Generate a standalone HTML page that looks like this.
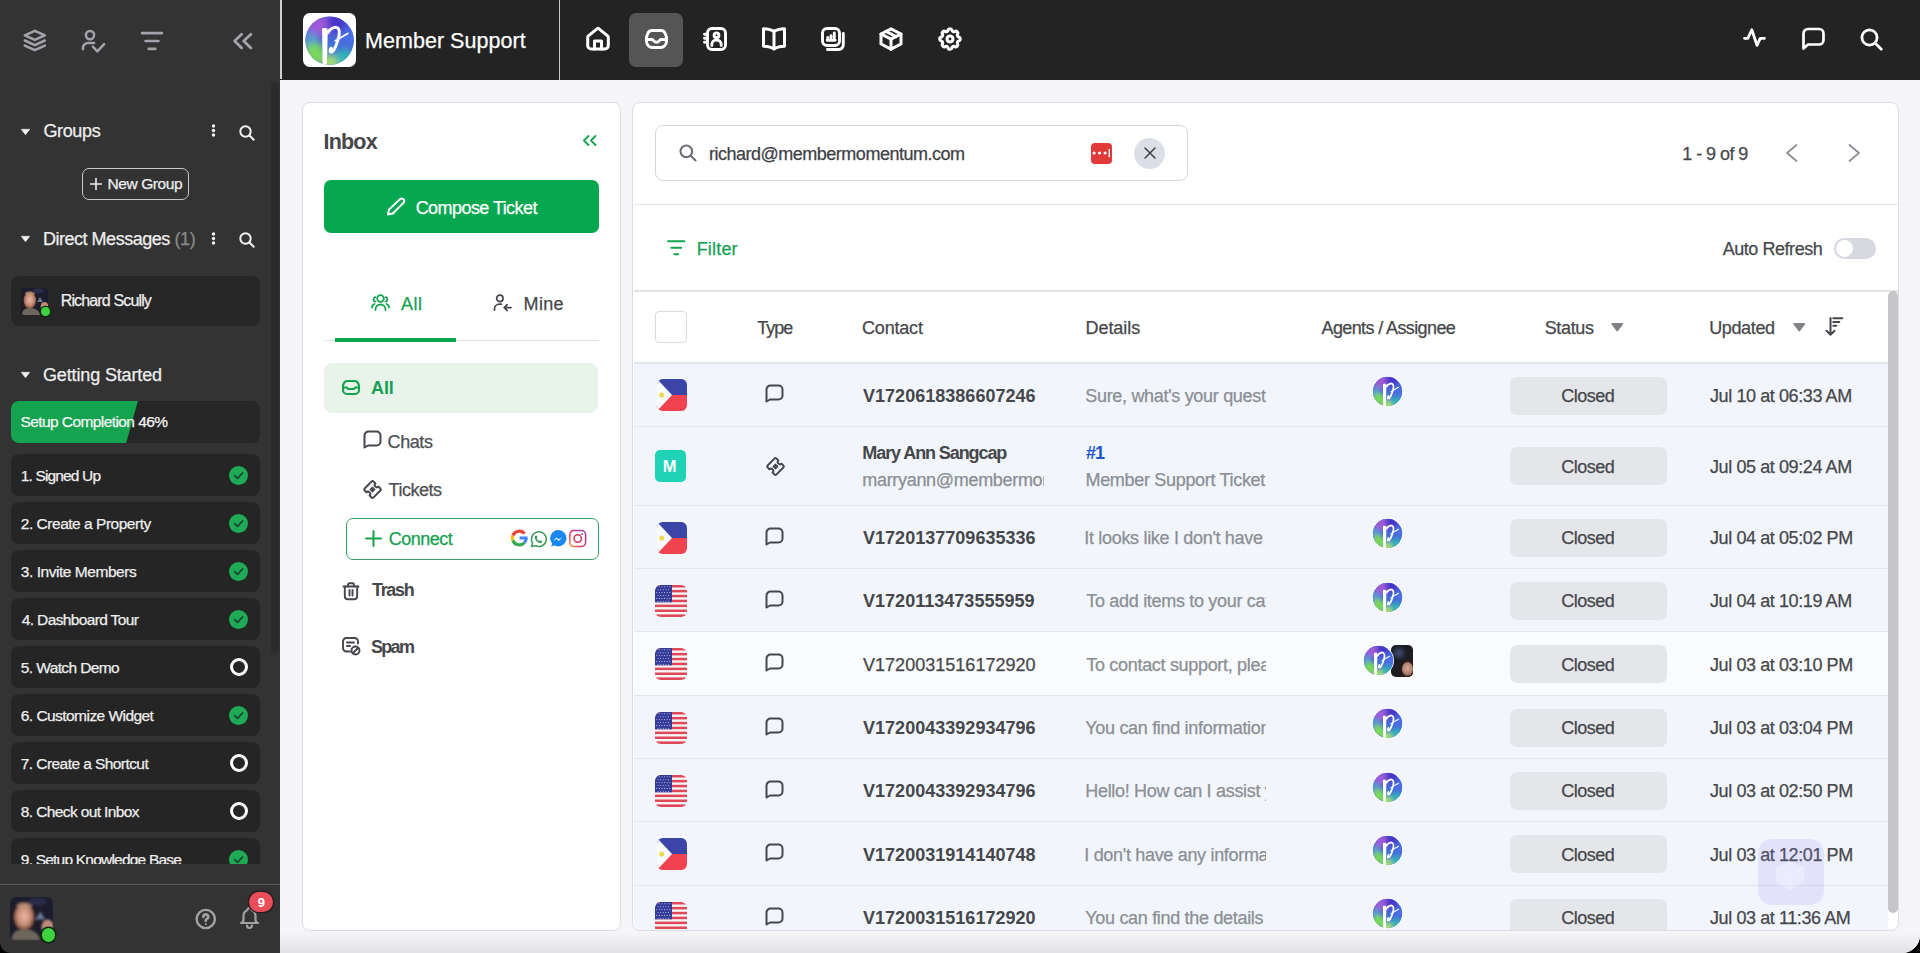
<!DOCTYPE html>
<html><head><meta charset="utf-8">
<style>
*{box-sizing:border-box;margin:0;padding:0}
html,body{width:1920px;height:953px;overflow:hidden;background:#000}
body{font-family:"Liberation Sans",sans-serif;position:relative}
.a{position:absolute}
.t{position:absolute;white-space:nowrap;line-height:1;-webkit-text-stroke:0.25px currentColor}
.t.b{-webkit-text-stroke:0}
svg{position:absolute;overflow:visible}
.item{position:absolute;left:11px;width:248.5px;height:42.3px;background:#252525;border-radius:8px}
.chk{position:absolute;left:229px;width:19px;height:19px;border-radius:50%;background:#1faa55}
.ring{position:absolute;left:229.5px;width:18px;height:18px;border-radius:50%;border:3px solid #fff}
.row{position:absolute;left:633.5px;width:1254px;border-bottom:1.5px solid #e3e6ec;background:#f2f6fc}
.badge{position:absolute;left:1509.5px;width:157px;height:38px;background:#e4e6ea;border-radius:7px}
</style></head><body>
<svg width="0" height="0" style="position:absolute">
<defs>
 <clipPath id="rr"><rect x="0" y="0" width="32" height="32" rx="6"/></clipPath>
 <g id="fph"><g clip-path="url(#rr)"><rect x="0" y="0" width="32" height="16" fill="#3b45a8"/><rect x="0" y="16" width="32" height="16" fill="#f0424f"/><path d="M0 0L16 16 0 32z" fill="#f9fafc"/><circle cx="5" cy="16" r="2.6" fill="#ecd94c"/></g></g>
 <g id="fus"><g clip-path="url(#rr)"><rect width="32" height="32" fill="#f5f5f5"/>
  <rect y="0" width="32" height="2.5" fill="#e0485a"/><rect y="4.9" width="32" height="2.5" fill="#e0485a"/><rect y="9.8" width="32" height="2.5" fill="#e0485a"/><rect y="14.7" width="32" height="2.5" fill="#e0485a"/><rect y="19.6" width="32" height="2.5" fill="#e0485a"/><rect y="24.5" width="32" height="2.5" fill="#e0485a"/><rect y="29.4" width="32" height="2.6" fill="#e0485a"/>
  <rect width="17" height="17.3" fill="#343a98"/>
  <g fill="#fff" opacity="0.7"><circle cx="1.8" cy="1.8" r=".55"/><circle cx="4.4" cy="1.8" r=".55"/><circle cx="7.0" cy="1.8" r=".55"/><circle cx="9.6" cy="1.8" r=".55"/><circle cx="12.2" cy="1.8" r=".55"/><circle cx="14.8" cy="1.8" r=".55"/><circle cx="3.1" cy="4.7" r=".55"/><circle cx="5.7" cy="4.7" r=".55"/><circle cx="8.3" cy="4.7" r=".55"/><circle cx="10.9" cy="4.7" r=".55"/><circle cx="13.5" cy="4.7" r=".55"/><circle cx="1.8" cy="7.6" r=".55"/><circle cx="4.4" cy="7.6" r=".55"/><circle cx="7.0" cy="7.6" r=".55"/><circle cx="9.6" cy="7.6" r=".55"/><circle cx="12.2" cy="7.6" r=".55"/><circle cx="14.8" cy="7.6" r=".55"/><circle cx="3.1" cy="10.5" r=".55"/><circle cx="5.7" cy="10.5" r=".55"/><circle cx="8.3" cy="10.5" r=".55"/><circle cx="10.9" cy="10.5" r=".55"/><circle cx="13.5" cy="10.5" r=".55"/><circle cx="1.8" cy="13.4" r=".55"/><circle cx="4.4" cy="13.4" r=".55"/><circle cx="7.0" cy="13.4" r=".55"/><circle cx="9.6" cy="13.4" r=".55"/><circle cx="12.2" cy="13.4" r=".55"/><circle cx="14.8" cy="13.4" r=".55"/><circle cx="3.1" cy="16.3" r=".55"/><circle cx="5.7" cy="16.3" r=".55"/><circle cx="8.3" cy="16.3" r=".55"/><circle cx="10.9" cy="16.3" r=".55"/><circle cx="13.5" cy="16.3" r=".55"/></g>
 </g></g>
 <g id="ichat" fill="none" stroke="#45474c" stroke-width="2" stroke-linecap="round" stroke-linejoin="round"><path d="M1.5 17.5V5.5a4 4 0 0 1 4-4h8a4 4 0 0 1 4 4v6a4 4 0 0 1-4 4H5z"/></g>
 <g id="iticket" fill="none" stroke="#45474c" stroke-width="2" stroke-linecap="round" stroke-linejoin="round"><g transform="translate(9.5 9.5) rotate(45)"><path d="M-6.3 -4.8a1.5 1.5 0 0 1 1.5-1.5H-2.2a2.2 2.2 0 0 0 4.4 0H4.8a1.5 1.5 0 0 1 1.5 1.5V4.8a1.5 1.5 0 0 1-1.5 1.5H2.2a2.2 2.2 0 0 0-4.4 0H-4.8a1.5 1.5 0 0 1-1.5-1.5z"/><rect x="-1.6" y="-1.6" width="3.2" height="3.2" fill="#45474c" stroke-width="1.2"/></g></g>
 <linearGradient id="avl" x1="0.2" y1="0" x2="0.6" y2="1"><stop offset="0" stop-color="#8a3cc8"/><stop offset="0.3" stop-color="#3b4fd0"/><stop offset="0.55" stop-color="#4a8ad8"/><stop offset="0.75" stop-color="#5cc48a"/><stop offset="1" stop-color="#a8d850"/></linearGradient>

 <clipPath id="pc"><circle cx="25" cy="25" r="24.6"/></clipPath>
 <filter id="bl" x="-50%" y="-50%" width="200%" height="200%"><feGaussianBlur stdDeviation="4"/></filter>
 <symbol id="plogo" viewBox="0 0 50 50">
  <g clip-path="url(#pc)">
   <rect width="50" height="50" fill="#4a62d6"/>
   <g filter="url(#bl)">
    <circle cx="14" cy="9" r="11" fill="#a05ad8"/>
    <circle cx="32" cy="7" r="10" fill="#4636c8"/>
    <circle cx="46" cy="22" r="10" fill="#4a6ee6"/>
    <circle cx="5" cy="24" r="8" fill="#5a9ad0"/>
    <circle cx="10" cy="38" r="11" fill="#78d85a"/>
    <circle cx="26" cy="48" r="9" fill="#a4e070"/>
    <circle cx="40" cy="42" r="9" fill="#2fb4b8"/>
    <circle cx="28" cy="30" r="6" fill="#3a78d8"/>
   </g>
  </g>
  <path d="M17.3 12.8c1.6-.9 4.4-.9 5.6.2.3 6-.2 24-.7 36.3l-4.2.4c-.4-12-.3-25-.7-36.9z" fill="#fff"/>
  <path d="M23.2 17C26 12.3 31 10.2 33.6 12.6 36.2 15 34.4 23.5 31.3 30.6 29.8 34.2 27.7 37 26.2 36.6 25 36.2 25.4 34.3 26.6 32.6" fill="none" stroke="#fff" stroke-width="3" stroke-linecap="round"/>
  <path d="M30.8 25.2L43.5 17.8" stroke="#fff" stroke-width="1.8" stroke-linecap="round"/>
 </symbol>

 <filter id="pb" x="-20%" y="-20%" width="140%" height="140%"><feGaussianBlur stdDeviation="0.7"/></filter>
 <radialGradient id="skin" cx="0.5" cy="0.45" r="0.55"><stop offset="0" stop-color="#e8b8a4"/><stop offset="0.55" stop-color="#c98e78"/><stop offset="0.85" stop-color="#8a5a4a"/><stop offset="1" stop-color="#3a2a2a" stop-opacity="0"/></radialGradient>
 <symbol id="photo" viewBox="0 0 27 27">
  <rect width="27" height="27" fill="#1b1d2c"/>
  <g filter="url(#pb)">
   <ellipse cx="8.8" cy="12.5" rx="7.4" ry="9.8" fill="#2a1e20"/>
   <ellipse cx="8.8" cy="12.8" rx="6.4" ry="8.6" fill="url(#skin)"/>
   <ellipse cx="9" cy="5.2" rx="5" ry="2" fill="#c8a080" opacity=".6"/>
   <path d="M1 27c0-5 3-7 8-7s9 2 10 7z" fill="#6e655c"/>
   <path d="M16 14l3-5 3 5z" fill="#8c9ac8" opacity=".7"/>
   <ellipse cx="23.5" cy="18.5" rx="3.8" ry="4.5" fill="#c08a78"/>
   <ellipse cx="17" cy="3" rx="6" ry="2.5" fill="#2c3050" opacity=".8"/>
  </g>
 </symbol>
 <g id="iav"><circle cx="15.5" cy="15.5" r="15.5" fill="#fff"/><use href="#plogo" x="0.6" y="0.6" width="29.8" height="29.8"/></g>
 <g id="isrch" fill="none" stroke-linecap="round"><circle cx="6.5" cy="6.5" r="5.2"/><path d="M10.5 10.5l4.2 4.2"/></g>
</defs></svg>
<!-- ============ LEFT SIDEBAR ============ -->
<div class="a" style="left:0;top:0;width:280px;height:953px;background:#333333;border-bottom-left-radius:11px"></div>
<div class="a" style="left:271px;top:82px;width:8px;height:571px;background:#2b2b2b;border-radius:4px"></div>
<svg style="left:22px;top:28px" width="25" height="25" viewBox="0 0 24 24" fill="none" stroke="#a3a3ab" stroke-width="2.5" stroke-linecap="round" stroke-linejoin="round"><path d="M12.3 2.8l9.6 4.3-9.6 4.3-9.6-4.3z"/><path d="M2.7 12l9.6 4.4 9.6-4.4"/><path d="M2.7 16.9l9.6 4.4 9.6-4.4"/></svg>
<svg style="left:81px;top:28px" width="25" height="25" viewBox="0 0 24 24" fill="none" stroke="#a3a3ab" stroke-width="2.4" stroke-linecap="round" stroke-linejoin="round"><circle cx="8.65" cy="6.8" r="3.95"/><path d="M1.9 20.4v-1.1a5 5 0 0 1 5-5h5.7"/><path d="M11.4 17.9l4.3 4.5 6.5-7"/></svg>
<svg style="left:139px;top:28px" width="25" height="25" viewBox="0 0 25 25" fill="none" stroke="#a3a3ab" stroke-width="2.7" stroke-linecap="round"><path d="M3.2 5.2h19.6"/><path d="M6.6 13h12.8"/><path d="M9.7 20.8h6.6"/></svg>
<svg style="left:231px;top:29px" width="24" height="24" viewBox="0 0 24 24" fill="none" stroke="#a3a3ab" stroke-width="2.8" stroke-linecap="round" stroke-linejoin="round"><path d="M10.7 5.2L3.6 12l7.1 7.1"/><path d="M19.9 5.2L12.7 12l7.2 7.1"/></svg>

<svg style="left:20.5px;top:128.5px" width="9" height="6" viewBox="0 0 9 6"><path d="M0.3 0.3h8.4L4.5 5.8z" fill="#f0f0f0" stroke="#f0f0f0" stroke-width="0.6" stroke-linejoin="round"/></svg>
<svg style="left:210.5px;top:124px" width="5" height="13" viewBox="0 0 5 13"><circle cx="2.5" cy="2" r="1.7" fill="#f0f0f0"/><circle cx="2.5" cy="6.5" r="1.7" fill="#f0f0f0"/><circle cx="2.5" cy="11" r="1.7" fill="#f0f0f0"/></svg>
<svg style="left:238.5px;top:124.5px" width="16" height="16" viewBox="0 0 16 16" stroke="#f0f0f0" stroke-width="2"><use href="#isrch"/></svg>
<div class="a" style="left:82px;top:167.5px;width:106.7px;height:32.5px;border:1.6px solid #c8c8c8;border-radius:7px"></div>
<svg style="left:89.5px;top:178px" width="12" height="12" viewBox="0 0 12 12" stroke="#eee" stroke-width="1.6" stroke-linecap="round"><path d="M6 0.5v11M0.5 6h11"/></svg>

<svg style="left:20.5px;top:236px" width="9" height="6" viewBox="0 0 9 6"><path d="M0.3 0.3h8.4L4.5 5.8z" fill="#f0f0f0" stroke="#f0f0f0" stroke-width="0.6" stroke-linejoin="round"/></svg>
<svg style="left:210.5px;top:231.5px" width="5" height="13" viewBox="0 0 5 13"><circle cx="2.5" cy="2" r="1.7" fill="#f0f0f0"/><circle cx="2.5" cy="6.5" r="1.7" fill="#f0f0f0"/><circle cx="2.5" cy="11" r="1.7" fill="#f0f0f0"/></svg>
<svg style="left:238.5px;top:232px" width="16" height="16" viewBox="0 0 16 16" stroke="#f0f0f0" stroke-width="2"><use href="#isrch"/></svg>
<div class="a" style="left:11px;top:275.5px;width:248.5px;height:50.6px;background:#262626;border-radius:8px"></div>
<div class="a" style="left:21px;top:288px;width:27px;height:27px;border-radius:4px;overflow:hidden"><svg style="left:0;top:0" width="27" height="27" viewBox="0 0 27 27"><use href="#photo"/></svg></div>
<div class="a" style="left:41px;top:307.3px;width:8.6px;height:8.6px;border-radius:50%;background:#3fd13f;box-shadow:0 0 0 1.2px #0a2a0a"></div>

<svg style="left:20.5px;top:372px" width="9" height="6" viewBox="0 0 9 6"><path d="M0.3 0.3h8.4L4.5 5.8z" fill="#f0f0f0" stroke="#f0f0f0" stroke-width="0.6" stroke-linejoin="round"/></svg>
<div class="a" style="left:11px;top:400.6px;width:248.5px;height:42.3px;background:#262626;border-radius:8px;overflow:hidden">
  <div class="a" style="left:0;top:0;width:130px;height:43px;background:#14a44f;clip-path:polygon(0 0,127px 0,115px 43px,0 43px)"></div>
</div>

<div class="a" style="left:0;top:450px;width:280px;height:413.5px;overflow:hidden">
  <div class="item" style="top:4.2px"></div><div class="chk" style="top:15.8px"></div>
  <div class="item" style="top:52.2px"></div><div class="chk" style="top:63.8px"></div>
  <div class="item" style="top:100.2px"></div><div class="chk" style="top:111.8px"></div>
  <div class="item" style="top:148.2px"></div><div class="chk" style="top:159.8px"></div>
  <div class="item" style="top:196.2px"></div><div class="ring" style="top:208.2px"></div>
  <div class="item" style="top:244.2px"></div><div class="chk" style="top:255.8px"></div>
  <div class="item" style="top:292.2px"></div><div class="ring" style="top:304.2px"></div>
  <div class="item" style="top:340.2px"></div><div class="ring" style="top:352.2px"></div>
  <div class="item" style="top:388.2px"></div><div class="chk" style="top:399.8px"></div>
</div>
<svg style="left:0;top:450px" width="280" height="414" viewBox="0 0 280 414"><g fill="none" stroke="#1d3b28" stroke-width="1.6" stroke-linecap="round" stroke-linejoin="round">
  <path d="M234.5 25.5l3 3 5-5.5"/><path d="M234.5 73.5l3 3 5-5.5"/><path d="M234.5 121.5l3 3 5-5.5"/><path d="M234.5 169.5l3 3 5-5.5"/><path d="M234.5 265.5l3 3 5-5.5"/><path d="M234.5 409.5l3 3 5-5.5"/>
</g></svg>

<div class="a" style="left:0;top:884px;width:280px;height:1px;background:#595959"></div>
<div class="a" style="left:10.3px;top:897px;width:43.2px;height:43.5px;border-radius:6px;overflow:hidden"><svg style="left:0;top:0" width="43.2" height="43.5" viewBox="0 0 27 27" preserveAspectRatio="none"><use href="#photo"/></svg></div>
<div class="a" style="left:41.6px;top:928.4px;width:13.4px;height:13.4px;border-radius:50%;background:#3fd13f;box-shadow:0 0 0 1.5px #0a2a0a"></div>
<svg style="left:194.5px;top:907.8px" width="21.5" height="22" viewBox="0 0 24 24" fill="none" stroke="#a2a2a6" stroke-width="2.7" stroke-linecap="round"><circle cx="12" cy="12" r="10.2"/><path d="M9.4 9.6a2.7 2.7 0 1 1 3.9 2.3c-.8.4-1.3 1-1.3 1.8v.3" stroke-width="3"/><circle cx="12" cy="17.6" r="1.1" fill="#a2a2a6" stroke="none"/></svg>
<svg style="left:238.5px;top:906px" width="21" height="24" viewBox="0 0 21 24" fill="none" stroke="#a2a2a6" stroke-width="2.2" stroke-linecap="round" stroke-linejoin="round"><path d="M8.5 4a2 2 0 1 1 4 0a6.5 6.5 0 0 1 4 6v3.5a3.5 3.5 0 0 0 2.5 3.5H2a3.5 3.5 0 0 0 2.5-3.5V10a6.5 6.5 0 0 1 4-6"/><path d="M8 19.5a2.5 2.5 0 0 0 5 0"/></svg>
<div class="a" style="left:248.6px;top:891.6px;width:24.4px;height:20px;border-radius:10px;background:#e94f5a;box-shadow:0 0 0 1.3px #2b1b1d"></div>
<!-- ============ TOP BAR ============ -->
<div class="a" style="left:280px;top:0;width:1640px;height:80px;background:#232323"></div>
<div class="a" style="left:280px;top:0;width:1.6px;height:78.5px;background:#cfcfd4"></div>
<div class="a" style="left:303px;top:13px;width:53px;height:54px;background:#fff;border-radius:7px"></div>
<svg style="left:305px;top:15.5px" width="49.2" height="49.2" viewBox="0 0 50 50"><use href="#plogo"/></svg>
<div class="a" style="left:558.5px;top:0;width:1.5px;height:80px;background:#c8c8c8"></div>
<div class="a" style="left:629px;top:13px;width:54px;height:54px;background:#555555;border-radius:7px"></div>
<!-- home -->
<svg style="left:585.5px;top:26.5px" width="24" height="24" viewBox="0 0 24 24" fill="none" stroke="#fff" stroke-width="3" stroke-linecap="round" stroke-linejoin="round"><path d="M1.7 10.3a2 2 0 0 1 .7-1.5L11 1.8a1.5 1.5 0 0 1 2 0l8.6 7a2 2 0 0 1 .7 1.5V18.5a3.5 3.5 0 0 1-3.5 3.5H5.2a3.5 3.5 0 0 1-3.5-3.5z"/><path d="M8.5 22v-8h7v8"/></svg>
<!-- inbox -->
<svg style="left:644.5px;top:28.5px" width="23" height="20" viewBox="0 0 23 20" fill="none" stroke="#fff" stroke-width="2.9" stroke-linecap="round" stroke-linejoin="round"><path d="M7 1.5h9a4.5 4.5 0 0 1 4.2 2.9L21.5 8v4.5a6 6 0 0 1-6 6h-8a6 6 0 0 1-6-6V8l1.3-3.6A4.5 4.5 0 0 1 7 1.5z"/><path d="M1.5 10.5h5.5c.8 0 1.2.5 1.6 1.2.5 1 1.3 1.6 2.9 1.6s2.4-.6 2.9-1.6c.4-.7.8-1.2 1.6-1.2h5.5"/></svg>
<!-- address book -->
<svg style="left:702.5px;top:26.5px" width="24" height="24" viewBox="0 0 24 24" fill="none" stroke="#fff" stroke-width="2.9" stroke-linecap="round" stroke-linejoin="round"><rect x="4.5" y="1.5" width="18" height="21" rx="4.5"/><circle cx="13.5" cy="8.3" r="2.4"/><path d="M8.8 18.5v-.8a4.7 4.7 0 0 1 9.4 0v.8"/><path d="M1.5 7.2h2.5M1.5 11.2h2.5M1.5 15.2h2.5"/></svg>
<!-- book -->
<svg style="left:761.5px;top:26.5px" width="24" height="24" viewBox="0 0 24 24" fill="none" stroke="#fff" stroke-width="3" stroke-linecap="round" stroke-linejoin="round"><path d="M12 4.5C9.8 3 6 2 1.5 1.8v17.4c4.5.2 8.3 1 10.5 2.8 2.2-1.8 6-2.6 10.5-2.8V1.8C18 2 14.2 3 12 4.5z"/><path d="M12 4.5v17"/></svg>
<!-- report -->
<svg style="left:820.5px;top:26.5px" width="24" height="24" viewBox="0 0 24 24" fill="none" stroke="#fff" stroke-width="2.9" stroke-linecap="round" stroke-linejoin="round"><rect x="1.5" y="1.5" width="17" height="17" rx="4.5"/><path d="M22.3 6.5v11.3a4.7 4.7 0 0 1-4.7 4.7H6.5"/><path d="M6.2 13.3h8M6.7 11v-.6M10 11V8.8M13.3 11V6"/></svg>
<!-- package -->
<svg style="left:878.5px;top:26.5px" width="24" height="24" viewBox="0 0 24 24" fill="none" stroke="#fff" stroke-width="3" stroke-linecap="round" stroke-linejoin="round"><path d="M12 1.8l10 5.2v10L12 22.2 2 17V7z"/><path d="M2 7l10 5.2L22 7"/><path d="M12 12.2v10"/><path d="M7 4.4l10 5.2"/></svg>
<!-- settings -->
<svg style="left:937.5px;top:26.5px" width="24" height="24" viewBox="1.5 1.5 21 21" fill="none" stroke="#fff" stroke-width="2.7" stroke-linecap="round" stroke-linejoin="round"><path d="M10.325 4.317c.426 -1.756 2.924 -1.756 3.35 0a1.724 1.724 0 0 0 2.573 1.066c1.543 -.94 3.31 .826 2.37 2.37a1.724 1.724 0 0 0 1.065 2.572c1.756 .426 1.756 2.924 0 3.35a1.724 1.724 0 0 0 -1.066 2.573c.94 1.543 -.826 3.31 -2.37 2.37a1.724 1.724 0 0 0 -2.572 1.065c-.426 1.756 -2.924 1.756 -3.35 0a1.724 1.724 0 0 0 -2.573 -1.066c-1.543 .94 -3.31 -.826 -2.37 -2.37a1.724 1.724 0 0 0 -1.065 -2.572c-1.756 -.426 -1.756 -2.924 0 -3.35a1.724 1.724 0 0 0 1.066 -2.573c-.94 -1.543 .826 -3.31 2.37 -2.37c1 .608 2.296 .07 2.572 -1.065z"/><circle cx="12" cy="12" r="2.6"/></svg>
<!-- right icons -->
<svg style="left:1743px;top:28px" width="23" height="19" viewBox="0 0 23 19" fill="none" stroke="#fff" stroke-width="2.8" stroke-linecap="round" stroke-linejoin="round"><path d="M1.5 10.3h3.3L8.8 1.8l5.2 15.5 3.2-7h4.3"/></svg>
<svg style="left:1802px;top:27px" width="23" height="23" viewBox="0 0 23 23" fill="none" stroke="#fff" stroke-width="2.7" stroke-linecap="round" stroke-linejoin="round"><path d="M1.5 21.5V6.5a4.5 4.5 0 0 1 4.5-4.5h11a4.5 4.5 0 0 1 4.5 4.5v6.5a4.5 4.5 0 0 1-4.5 4.5H6z"/></svg>
<svg style="left:1860px;top:28px" width="23" height="23" viewBox="0 0 23 23" fill="none" stroke="#fff" stroke-width="2.8" stroke-linecap="round"><circle cx="9.5" cy="9.5" r="7.6"/><path d="M15.3 15.3l6 6"/></svg>
<!-- ============ MAIN ============ -->
<div class="a" style="left:280px;top:80px;width:1640px;height:873px;background:#f5f5f8;border-bottom-right-radius:18px;overflow:hidden">
  <div class="a" style="left:0;top:853px;width:1640px;height:20px;background:linear-gradient(#f5f5f8,#e2e2e5)"></div>
</div>
<div class="a" style="left:302px;top:102px;width:319px;height:829px;background:#fff;border:1.5px solid #dcdde2;border-radius:8px"></div>
<svg style="left:582.5px;top:134.5px" width="14" height="11" viewBox="0 0 14 11" fill="none" stroke="#14a44f" stroke-width="1.9" stroke-linecap="round" stroke-linejoin="round"><path d="M5.5 1L1 5.5 5.5 10M12.5 1L8 5.5l4.5 4.5"/></svg>
<div class="a" style="left:324px;top:180px;width:274.5px;height:52.5px;background:#06a84f;border-radius:7px"></div>
<svg style="left:385.5px;top:196.5px" width="19.5" height="18.5" viewBox="0 0 20 19" fill="none" stroke="#fff" stroke-width="2" stroke-linecap="round" stroke-linejoin="round"><path d="M14.2 2.3a2.6 2.6 0 0 1 3.7 3.7L7 17 2 18l1-5z"/></svg>

<svg style="left:370.5px;top:294px" width="19" height="17" viewBox="0 0 19 17" fill="none" stroke="#14a44f" stroke-width="1.8" stroke-linecap="round" stroke-linejoin="round"><circle cx="9.5" cy="4.5" r="3.3"/><path d="M4.5 16v-.5a5 5 0 0 1 10 0v.5"/><path d="M4.3 3.2a2.3 2.3 0 0 0 .2 4.5M14.7 3.2a2.3 2.3 0 0 1-.2 4.5"/><path d="M1 13.5a3.5 3.5 0 0 1 2.5-3.5M18 13.5a3.5 3.5 0 0 0-2.5-3.5"/></svg>
<svg style="left:493px;top:293.5px" width="19.5" height="17.5" viewBox="0 0 20 18" fill="none" stroke="#45474c" stroke-width="1.8" stroke-linecap="round" stroke-linejoin="round"><circle cx="7" cy="4.5" r="3.3"/><path d="M1.5 16.5v-1a5 5 0 0 1 5-5h2"/><path d="M18.5 14h-7M14.5 11l-3 3 3 3"/></svg>
<div class="a" style="left:324px;top:339.5px;width:275px;height:1.5px;background:#e3e4e8"></div>
<div class="a" style="left:335px;top:338px;width:121px;height:4px;background:#0ca64f"></div>

<div class="a" style="left:324px;top:363px;width:274px;height:50px;background:#e8f4ea;border-radius:8px"></div>
<svg style="left:341.7px;top:379.5px" width="18" height="15" viewBox="0 0 18 15" fill="none" stroke="#14a44f" stroke-width="2.1" stroke-linecap="round" stroke-linejoin="round"><path d="M5.5 1h7a4 4 0 0 1 3.7 2.5L17 5.5V10a4 4 0 0 1-4 4H5a4 4 0 0 1-4-4V5.5l.8-2A4 4 0 0 1 5.5 1z"/><path d="M1 7.5h4l1 1.5h6l1-1.5h4"/></svg>

<svg style="left:362.5px;top:430.3px" width="19" height="17.5" viewBox="0 0 19 17.5"><use href="#ichat"/></svg>
<svg style="left:362.5px;top:479.8px" width="19" height="19" viewBox="0 0 19 19"><use href="#iticket"/></svg>

<div class="a" style="left:345.5px;top:517.5px;width:253px;height:42px;border:1.5px solid #36a062;border-radius:7px;background:#fff"></div>
<svg style="left:364.5px;top:529.5px" width="17" height="17" viewBox="0 0 17 17" stroke="#14a44f" stroke-width="2" stroke-linecap="round"><path d="M8.5 1v15M1 8.5h15"/></svg>
<svg style="left:509.6px;top:529.3px" width="78" height="19" viewBox="0 0 78 19">
  <g fill="none" stroke-width="3.1"><path d="M14.59 4.56A6.9 6.9 0 0 0 2.82 6.64" stroke="#ea4335"/><path d="M2.82 6.64A6.9 6.9 0 0 0 2.82 11.36" stroke="#fbbc05"/><path d="M2.82 11.36A6.9 6.9 0 0 0 14.59 13.44" stroke="#34a853"/><path d="M14.59 13.44A6.9 6.9 0 0 0 16.20 9.00" stroke="#4285f4"/><path d="M9.6 9.0h7.9" stroke="#4285f4"/></g>
  <g fill="none" stroke="#3f9a5c" stroke-width="1.5" stroke-linejoin="round"><path d="M21.5 17.6l1.1-3.5a7.4 7.4 0 1 1 2.8 2.6z"/></g>
  <path d="M25.7 6.6c.5-.3 1 0 1.2.5l.5 1.2c.1.3 0 .6-.2.8l-.5.5c.5 1.1 1.4 2 2.5 2.5l.5-.5c.2-.2.5-.3.8-.2l1.2.5c.5.2.8.7.5 1.2-.5.8-1.3 1.2-2.2 1-2.5-.6-4.6-2.7-5.2-5.2-.2-.9.2-1.7.9-2.3z" fill="#3f9a5c"/>
  <circle cx="48.3" cy="9.3" r="8.2" fill="#1b87f2"/><path d="M41.2 17.8l1.2-4 3 2z" fill="#1b87f2"/><path d="M43.2 12l3.4-3.6 1.9 1.9 3.6-1.9-3.4 3.6-1.9-1.9z" fill="#fff"/>
  <defs><linearGradient id="igg" x1="0" y1="1" x2="1" y2="0"><stop offset="0" stop-color="#f09433"/><stop offset="0.35" stop-color="#e6336a"/><stop offset="1" stop-color="#9b3aa8"/></linearGradient></defs>
  <rect x="59.8" y="1.6" width="15.8" height="15.8" rx="4.2" fill="none" stroke="url(#igg)" stroke-width="1.5"/><circle cx="67.7" cy="9.5" r="3.7" fill="none" stroke="#c8355a" stroke-width="1.5"/><circle cx="72.2" cy="5.2" r="0.9" fill="#9b3aa8"/>
</svg>

<svg style="left:341.5px;top:581.5px" width="18" height="18" viewBox="0 0 18 18" fill="none" stroke="#45474c" stroke-width="1.9" stroke-linecap="round" stroke-linejoin="round"><path d="M1.5 4.5h15"/><path d="M2.8 4.5v9.8a3 3 0 0 0 3 3h6.4a3 3 0 0 0 3-3V4.5"/><path d="M6 4.5V2.8A1.5 1.5 0 0 1 7.5 1.3h3A1.5 1.5 0 0 1 12 2.8v1.7"/><path d="M7.5 8v5.5M10.5 8v5.5"/></svg>
<svg style="left:341.5px;top:636.5px" width="19" height="19" viewBox="0 0 19 19" fill="none" stroke="#45474c" stroke-width="1.9" stroke-linecap="round" stroke-linejoin="round"><path d="M8 14.5H4.5a3.5 3.5 0 0 1-3.5-3.5V4.5A3.5 3.5 0 0 1 4.5 1h8a3.5 3.5 0 0 1 3.5 3.5v2"/><path d="M5 5.5h7M5 9h3"/><circle cx="13.5" cy="13.5" r="4"/><path d="M11 16l5-5"/></svg>
<!-- ===== right panel ===== -->
<div class="a" style="left:632px;top:101.5px;width:1267px;height:829.5px;background:#fff;border:1.5px solid #dcdde2;border-radius:8px"></div>
<div class="a" style="left:655px;top:125px;width:533px;height:55.6px;border:1.5px solid #d6d7dc;border-radius:8px"></div>
<svg style="left:679px;top:144px" width="18" height="18" viewBox="0 0 16 16" stroke="#6b6d72" stroke-width="1.8"><use href="#isrch"/></svg>
<div class="a" style="left:1090.5px;top:142.5px;width:21.5px;height:21.5px;background:#e03a3a;border-radius:4px"></div>
<svg style="left:1090px;top:145px" width="22" height="16" viewBox="0 0 22 16" fill="#fff"><circle cx="4.1" cy="8" r="1.55"/><circle cx="9.6" cy="8" r="1.55"/><circle cx="15.1" cy="8" r="1.55"/><rect x="18.6" y="4" width="1.3" height="8.2"/></svg>
<div class="a" style="left:1133.5px;top:137.5px;width:31.5px;height:31.5px;background:#dcdfe5;border-radius:50%"></div>
<svg style="left:1143.5px;top:147.3px" width="12" height="12" viewBox="0 0 12 12" stroke="#3e4046" stroke-width="1.5" stroke-linecap="round"><path d="M1 1l10 10M11 1L1 11"/></svg>
<svg style="left:1785px;top:144px" width="13" height="18" viewBox="0 0 13 18" fill="none" stroke="#8a8d93" stroke-width="1.7" stroke-linecap="round" stroke-linejoin="round"><path d="M11.5 1L2 9l9.5 8"/></svg>
<svg style="left:1848px;top:144px" width="13" height="18" viewBox="0 0 13 18" fill="none" stroke="#8a8d93" stroke-width="1.7" stroke-linecap="round" stroke-linejoin="round"><path d="M1.5 1L11 9l-9.5 8"/></svg>
<div class="a" style="left:633.5px;top:203.7px;width:1264px;height:1.5px;background:#e3e4e8"></div>
<svg style="left:666.5px;top:240px" width="18.5" height="15.5" viewBox="0 0 18.5 15.5" stroke="#14a44f" stroke-width="1.9" stroke-linecap="round"><path d="M1 1.2h16.5M4.3 7.7h10M7.3 14.2h4"/></svg>
<div class="a" style="left:1833.5px;top:237.5px;width:42px;height:21px;background:#d6d9e0;border-radius:11px"></div>
<div class="a" style="left:1835.5px;top:239.5px;width:17px;height:17px;background:#fff;border-radius:50%"></div>
<div class="a" style="left:633.5px;top:290px;width:1264px;height:1.5px;background:#e3e4e8"></div>
<div class="a" style="left:655px;top:311.3px;width:31.5px;height:31.5px;border:1.5px solid #d9dbe0;border-radius:4px;background:#fff"></div>
<svg style="left:1611px;top:323px" width="12.5" height="8.5" viewBox="0 0 12.5 8.5"><path d="M1.3 1h9.9L6.25 7.5z" fill="#808288" stroke="#808288" stroke-width="1.8" stroke-linejoin="round"/></svg>
<svg style="left:1793px;top:323px" width="12.5" height="8.5" viewBox="0 0 12.5 8.5"><path d="M1.3 1h9.9L6.25 7.5z" fill="#808288" stroke="#808288" stroke-width="1.8" stroke-linejoin="round"/></svg>
<svg style="left:1824px;top:317px" width="19" height="19" viewBox="0 0 19 19" fill="none" stroke="#45474c" stroke-width="2" stroke-linecap="round" stroke-linejoin="round"><path d="M6.5 1v16.8M2.5 13.8l4 4 4-4"/><path d="M9.3 1.2h9M9.3 5h6M9.3 8.8h3"/></svg>
<div class="a" style="left:633.5px;top:362px;width:1254px;height:1.5px;background:#e3e6ec"></div>
<div class="a" style="left:633.5px;top:363px;width:1254px;height:566.5px;overflow:hidden;border-bottom-left-radius:7px">
<div class="a" style="left:0;top:0.55px;width:1254px;height:63.50px;background:#f2f6fc;border-bottom:1.5px solid #e3e6ec"><svg style="left:23.5px;top:15.8px" width="30" height="32" viewBox="0 0 32 32" preserveAspectRatio="none"><use href="#fph"/></svg><svg style="left:131.4px;top:20.8px" width="19" height="17.5" viewBox="0 0 19 17.5"><use href="#ichat"/></svg><svg style="left:738.5px;top:12.5px" width="31" height="31" viewBox="0 0 31 31"><use href="#iav"/></svg><div class="a" style="left:876px;top:13px;width:157px;height:38px;background:#e4e6ea;border-radius:7px"></div></div>
<div class="a" style="left:0;top:64.05px;width:1254px;height:78.70px;background:#f2f6fc;border-bottom:1.5px solid #e3e6ec"><div class="a" style="left:21.2px;top:22.7px;width:31.8px;height:32.2px;background:#20d3b7;border-radius:5px"></div><svg style="left:132px;top:29.5px" width="19" height="19" viewBox="0 0 19 19"><use href="#iticket"/></svg><div class="a" style="left:876px;top:20.3px;width:157px;height:38px;background:#e4e6ea;border-radius:7px"></div></div>
<div class="a" style="left:0;top:142.75px;width:1254px;height:63.30px;background:#f2f6fc;border-bottom:1.5px solid #e3e6ec"><svg style="left:23.5px;top:15.8px" width="30" height="32" viewBox="0 0 32 32" preserveAspectRatio="none"><use href="#fph"/></svg><svg style="left:131.4px;top:20.8px" width="19" height="17.5" viewBox="0 0 19 17.5"><use href="#ichat"/></svg><svg style="left:738.5px;top:12.5px" width="31" height="31" viewBox="0 0 31 31"><use href="#iav"/></svg><div class="a" style="left:876px;top:13px;width:157px;height:38px;background:#e4e6ea;border-radius:7px"></div></div>
<div class="a" style="left:0;top:206.05px;width:1254px;height:63.30px;background:#f2f6fc;border-bottom:1.5px solid #e3e6ec"><svg style="left:21.2px;top:15.8px" width="32" height="32" viewBox="0 0 32 32" preserveAspectRatio="none"><use href="#fus"/></svg><svg style="left:131.4px;top:20.8px" width="19" height="17.5" viewBox="0 0 19 17.5"><use href="#ichat"/></svg><svg style="left:738.5px;top:12.5px" width="31" height="31" viewBox="0 0 31 31"><use href="#iav"/></svg><div class="a" style="left:876px;top:13px;width:157px;height:38px;background:#e4e6ea;border-radius:7px"></div></div>
<div class="a" style="left:0;top:269.35px;width:1254px;height:63.40px;background:#fafbfd;border-bottom:1.5px solid #e3e6ec"><svg style="left:21.2px;top:15.8px" width="32" height="32" viewBox="0 0 32 32" preserveAspectRatio="none"><use href="#fus"/></svg><svg style="left:131.4px;top:20.8px" width="19" height="17.5" viewBox="0 0 19 17.5"><use href="#ichat"/></svg><div class="a" style="left:757.5px;top:13px;width:22px;height:32px;border-radius:5px;overflow:hidden;background:#1c1c22"><div class="a" style="left:3px;top:3px;width:10px;height:10px;border-radius:50%;background:#5a6ca8;opacity:.55;filter:blur(2px)"></div><div class="a" style="left:9px;top:14px;width:16px;height:22px;border-radius:50%;background:#2a1c1a"></div><div class="a" style="left:11px;top:17px;width:11px;height:14px;border-radius:50%;background:radial-gradient(circle at 50% 45%,#d8a890 0,#b08070 55%,#5a3e36 100%)"></div></div><svg style="left:729px;top:13px" width="31" height="31" viewBox="0 0 31 31"><use href="#iav"/></svg><div class="a" style="left:876px;top:13px;width:157px;height:38px;background:#e4e6ea;border-radius:7px"></div></div>
<div class="a" style="left:0;top:332.75px;width:1254px;height:63.30px;background:#f2f6fc;border-bottom:1.5px solid #e3e6ec"><svg style="left:21.2px;top:15.8px" width="32" height="32" viewBox="0 0 32 32" preserveAspectRatio="none"><use href="#fus"/></svg><svg style="left:131.4px;top:20.8px" width="19" height="17.5" viewBox="0 0 19 17.5"><use href="#ichat"/></svg><svg style="left:738.5px;top:12.5px" width="31" height="31" viewBox="0 0 31 31"><use href="#iav"/></svg><div class="a" style="left:876px;top:13px;width:157px;height:38px;background:#e4e6ea;border-radius:7px"></div></div>
<div class="a" style="left:0;top:396.05px;width:1254px;height:63.30px;background:#f2f6fc;border-bottom:1.5px solid #e3e6ec"><svg style="left:21.2px;top:15.8px" width="32" height="32" viewBox="0 0 32 32" preserveAspectRatio="none"><use href="#fus"/></svg><svg style="left:131.4px;top:20.8px" width="19" height="17.5" viewBox="0 0 19 17.5"><use href="#ichat"/></svg><svg style="left:738.5px;top:12.5px" width="31" height="31" viewBox="0 0 31 31"><use href="#iav"/></svg><div class="a" style="left:876px;top:13px;width:157px;height:38px;background:#e4e6ea;border-radius:7px"></div></div>
<div class="a" style="left:0;top:459.35px;width:1254px;height:63.40px;background:#f2f6fc;border-bottom:1.5px solid #e3e6ec"><svg style="left:23.5px;top:15.8px" width="30" height="32" viewBox="0 0 32 32" preserveAspectRatio="none"><use href="#fph"/></svg><svg style="left:131.4px;top:20.8px" width="19" height="17.5" viewBox="0 0 19 17.5"><use href="#ichat"/></svg><svg style="left:738.5px;top:12.5px" width="31" height="31" viewBox="0 0 31 31"><use href="#iav"/></svg><div class="a" style="left:876px;top:13px;width:157px;height:38px;background:#e4e6ea;border-radius:7px"></div></div>
<div class="a" style="left:0;top:522.75px;width:1254px;height:63.30px;background:#f2f6fc;border-bottom:1.5px solid #e3e6ec"><svg style="left:21.2px;top:15.8px" width="32" height="32" viewBox="0 0 32 32" preserveAspectRatio="none"><use href="#fus"/></svg><svg style="left:131.4px;top:20.8px" width="19" height="17.5" viewBox="0 0 19 17.5"><use href="#ichat"/></svg><svg style="left:738.5px;top:12.5px" width="31" height="31" viewBox="0 0 31 31"><use href="#iav"/></svg><div class="a" style="left:876px;top:13px;width:157px;height:38px;background:#e4e6ea;border-radius:7px"></div></div>
</div>
<div class="a" style="left:1888.3px;top:290.5px;width:9.5px;height:622.5px;background:#c6c6c8;border-radius:5px"></div>

<!-- texts -->
<div class="t" style="left:43.50px;top:122px;font-size:18px;font-weight:normal;color:#eeeeee;letter-spacing:-0.380px">Groups</div>
<div class="t" style="left:107.60px;top:176px;font-size:15.5px;font-weight:normal;color:#eeeeee;letter-spacing:-0.425px">New Group</div>
<div class="t" style="left:43.00px;top:230px;font-size:18px;font-weight:normal;color:#eeeeee;letter-spacing:-0.486px">Direct Messages</div>
<div class="t" style="left:174.50px;top:230px;font-size:18px;font-weight:normal;color:#8a8a8a;letter-spacing:-0.400px">(1)</div>
<div class="t" style="left:60.70px;top:293px;font-size:16px;font-weight:normal;color:#eeeeee;letter-spacing:-0.854px">Richard Scully</div>
<div class="t" style="left:43.00px;top:366px;font-size:18px;font-weight:normal;color:#eeeeee;letter-spacing:-0.143px">Getting Started</div>
<div class="t" style="left:20.40px;top:414px;font-size:15.5px;font-weight:normal;color:#f4f4f4;letter-spacing:-0.574px">Setup Completion 46%</div>
<div class="t" style="left:365.00px;top:31px;font-size:21.5px;font-weight:normal;color:#ffffff;letter-spacing:0.038px">Member Support</div>
<div class="t b" style="left:323.60px;top:132px;font-size:21.5px;font-weight:bold;color:#46474b;letter-spacing:-0.825px">Inbox</div>
<div class="t" style="left:415.70px;top:199px;font-size:18px;font-weight:normal;color:#ffffff;letter-spacing:-0.562px">Compose Ticket</div>
<div class="t" style="left:401.00px;top:295px;font-size:18px;font-weight:normal;color:#17a052;letter-spacing:0.500px">All</div>
<div class="t" style="left:523.60px;top:295px;font-size:18px;font-weight:normal;color:#46474b;letter-spacing:0.333px">Mine</div>
<div class="t b" style="left:371.00px;top:379px;font-size:18px;font-weight:bold;color:#17a052;letter-spacing:-0.100px">All</div>
<div class="t" style="left:387.60px;top:433px;font-size:18px;font-weight:normal;color:#4d4f54;letter-spacing:-0.425px">Chats</div>
<div class="t" style="left:388.60px;top:481px;font-size:18px;font-weight:normal;color:#4d4f54;letter-spacing:-0.500px">Tickets</div>
<div class="t" style="left:388.70px;top:530px;font-size:18px;font-weight:normal;color:#17a052;letter-spacing:-0.500px">Connect</div>
<div class="t b" style="left:372.00px;top:581px;font-size:18px;font-weight:bold;color:#46474b;letter-spacing:-1.350px">Trash</div>
<div class="t b" style="left:371.00px;top:638px;font-size:18px;font-weight:bold;color:#46474b;letter-spacing:-1.700px">Spam</div>
<div class="t" style="left:708.90px;top:145px;font-size:18px;font-weight:normal;color:#3f4146;letter-spacing:-0.488px">richard@membermomentum.com</div>
<div class="t" style="left:1682.30px;top:145px;font-size:18px;font-weight:normal;color:#46474b;letter-spacing:-0.556px">1 - 9 of 9</div>
<div class="t" style="left:696.70px;top:240px;font-size:18px;font-weight:normal;color:#17a052;letter-spacing:0.180px">Filter</div>
<div class="t" style="left:1722.70px;top:240px;font-size:18px;font-weight:normal;color:#46474b;letter-spacing:-0.455px">Auto Refresh</div>
<div class="t" style="left:757.20px;top:319px;font-size:18px;font-weight:normal;color:#46474b;letter-spacing:-1.000px">Type</div>
<div class="t" style="left:862.00px;top:319px;font-size:18px;font-weight:normal;color:#46474b;letter-spacing:-0.183px">Contact</div>
<div class="t" style="left:1085.50px;top:319px;font-size:18px;font-weight:normal;color:#46474b;letter-spacing:-0.050px">Details</div>
<div class="t" style="left:1321.50px;top:319px;font-size:18px;font-weight:normal;color:#46474b;letter-spacing:-0.612px">Agents / Assignee</div>
<div class="t" style="left:1544.70px;top:319px;font-size:18px;font-weight:normal;color:#46474b;letter-spacing:-0.340px">Status</div>
<div class="t" style="left:1709.20px;top:319px;font-size:18px;font-weight:normal;color:#46474b;letter-spacing:-0.367px">Updated</div>
<div class="t b" style="left:662.70px;top:458px;font-size:16.5px;font-weight:bold;color:#ffffff;letter-spacing:1.800px">M</div>
<div class="t b" style="left:257.70px;top:896px;font-size:13px;font-weight:bold;color:#ffffff;letter-spacing:-0.700px">9</div>
<div class="a" style="left:0px;top:0px;width:280px;height:863.5px;overflow:hidden"><div class="a" style="left:0px;top:0px;width:1920px;height:953px">
<div class="t" style="left:20.80px;top:468px;font-size:15.5px;font-weight:normal;color:#eeeeee;letter-spacing:-0.855px">1. Signed Up</div>
<div class="t" style="left:20.80px;top:516px;font-size:15.5px;font-weight:normal;color:#eeeeee;letter-spacing:-0.479px">2. Create a Property</div>
<div class="t" style="left:20.80px;top:564px;font-size:15.5px;font-weight:normal;color:#eeeeee;letter-spacing:-0.456px">3. Invite Members</div>
<div class="t" style="left:21.80px;top:612px;font-size:15.5px;font-weight:normal;color:#eeeeee;letter-spacing:-0.638px">4. Dashboard Tour</div>
<div class="t" style="left:20.80px;top:660px;font-size:15.5px;font-weight:normal;color:#eeeeee;letter-spacing:-0.608px">5. Watch Demo</div>
<div class="t" style="left:20.80px;top:708px;font-size:15.5px;font-weight:normal;color:#eeeeee;letter-spacing:-0.550px">6. Customize Widget</div>
<div class="t" style="left:20.80px;top:756px;font-size:15.5px;font-weight:normal;color:#eeeeee;letter-spacing:-0.568px">7. Create a Shortcut</div>
<div class="t" style="left:20.80px;top:804px;font-size:15.5px;font-weight:normal;color:#eeeeee;letter-spacing:-0.618px">8. Check out Inbox</div>
<div class="t" style="left:20.80px;top:852px;font-size:15.5px;font-weight:normal;color:#eeeeee;letter-spacing:-0.786px">9. Setup Knowledge Base</div>
</div></div>
<div class="a" style="left:633.5px;top:363px;width:1254.0px;height:566.5px;overflow:hidden"><div class="a" style="left:-633.5px;top:-363px;width:1920px;height:953px">
<div class="t b" style="left:863.00px;top:387px;font-size:18px;font-weight:bold;color:#46474b;letter-spacing:0.025px">V1720618386607246</div>
<div class="t" style="left:1710.00px;top:387px;font-size:18px;font-weight:normal;color:#46474b;letter-spacing:-0.406px">Jul 10 at 06:33 AM</div>
<div class="t" style="left:1085.50px;top:471px;font-size:18px;font-weight:normal;color:#8b8e94;letter-spacing:-0.315px">Member Support Ticket</div>
<div class="t" style="left:1561.20px;top:387px;font-size:18px;font-weight:normal;color:#46474b;letter-spacing:-0.500px">Closed</div>
<div class="t b" style="left:862.30px;top:444px;font-size:18px;font-weight:bold;color:#46474b;letter-spacing:-1.087px">Mary Ann Sangcap</div>
<div class="t b" style="left:1086.00px;top:444px;font-size:18px;font-weight:bold;color:#1d55c8;letter-spacing:-1.000px">#1</div>
<div class="t" style="left:1561.20px;top:458px;font-size:18px;font-weight:normal;color:#46474b;letter-spacing:-0.500px">Closed</div>
<div class="t" style="left:1710.00px;top:458px;font-size:18px;font-weight:normal;color:#46474b;letter-spacing:-0.406px">Jul 05 at 09:24 AM</div>
<div class="t b" style="left:863.00px;top:529px;font-size:18px;font-weight:bold;color:#46474b;letter-spacing:0.025px">V1720137709635336</div>
<div class="t" style="left:1561.20px;top:529px;font-size:18px;font-weight:normal;color:#46474b;letter-spacing:-0.500px">Closed</div>
<div class="t" style="left:1710.00px;top:529px;font-size:18px;font-weight:normal;color:#46474b;letter-spacing:-0.406px">Jul 04 at 05:02 PM</div>
<div class="t b" style="left:863.00px;top:592px;font-size:18px;font-weight:bold;color:#46474b;letter-spacing:0.025px">V1720113473555959</div>
<div class="t" style="left:1561.20px;top:592px;font-size:18px;font-weight:normal;color:#46474b;letter-spacing:-0.500px">Closed</div>
<div class="t" style="left:1710.00px;top:592px;font-size:18px;font-weight:normal;color:#46474b;letter-spacing:-0.406px">Jul 04 at 10:19 AM</div>
<div class="t" style="left:863.00px;top:656px;font-size:18px;font-weight:normal;color:#46474b;letter-spacing:0.025px">V1720031516172920</div>
<div class="t" style="left:1561.20px;top:656px;font-size:18px;font-weight:normal;color:#46474b;letter-spacing:-0.500px">Closed</div>
<div class="t" style="left:1710.00px;top:656px;font-size:18px;font-weight:normal;color:#46474b;letter-spacing:-0.406px">Jul 03 at 03:10 PM</div>
<div class="t b" style="left:863.00px;top:719px;font-size:18px;font-weight:bold;color:#46474b;letter-spacing:0.025px">V1720043392934796</div>
<div class="t" style="left:1561.20px;top:719px;font-size:18px;font-weight:normal;color:#46474b;letter-spacing:-0.500px">Closed</div>
<div class="t" style="left:1710.00px;top:719px;font-size:18px;font-weight:normal;color:#46474b;letter-spacing:-0.406px">Jul 03 at 03:04 PM</div>
<div class="t b" style="left:863.00px;top:782px;font-size:18px;font-weight:bold;color:#46474b;letter-spacing:0.025px">V1720043392934796</div>
<div class="t" style="left:1561.20px;top:782px;font-size:18px;font-weight:normal;color:#46474b;letter-spacing:-0.500px">Closed</div>
<div class="t" style="left:1710.00px;top:782px;font-size:18px;font-weight:normal;color:#46474b;letter-spacing:-0.406px">Jul 03 at 02:50 PM</div>
<div class="t b" style="left:863.00px;top:846px;font-size:18px;font-weight:bold;color:#46474b;letter-spacing:0.025px">V1720031914140748</div>
<div class="t" style="left:1561.20px;top:846px;font-size:18px;font-weight:normal;color:#46474b;letter-spacing:-0.500px">Closed</div>
<div class="t" style="left:1710.00px;top:846px;font-size:18px;font-weight:normal;color:#46474b;letter-spacing:-0.406px">Jul 03 at 12:01 PM</div>
<div class="t b" style="left:863.00px;top:909px;font-size:18px;font-weight:bold;color:#46474b;letter-spacing:0.025px">V1720031516172920</div>
<div class="t" style="left:1561.20px;top:909px;font-size:18px;font-weight:normal;color:#46474b;letter-spacing:-0.500px">Closed</div>
<div class="t" style="left:1710.00px;top:909px;font-size:18px;font-weight:normal;color:#46474b;letter-spacing:-0.406px">Jul 03 at 11:36 AM</div>
</div></div>
<div class="a" style="left:633.5px;top:363px;width:632.5px;height:566.5px;overflow:hidden"><div class="a" style="left:-633.5px;top:-363px;width:1920px;height:953px">
<div class="t" style="left:1085.30px;top:387px;font-size:18px;font-weight:normal;color:#8b8e94;letter-spacing:-0.315px">Sure, what&#x27;s your question?</div>
<div class="t" style="left:1084.30px;top:529px;font-size:18px;font-weight:normal;color:#8b8e94;letter-spacing:-0.315px">It looks like I don&#x27;t have specific</div>
<div class="t" style="left:1086.30px;top:592px;font-size:18px;font-weight:normal;color:#8b8e94;letter-spacing:-0.315px">To add items to your catalog</div>
<div class="t" style="left:1086.30px;top:656px;font-size:18px;font-weight:normal;color:#8b8e94;letter-spacing:-0.315px">To contact support, please</div>
<div class="t" style="left:1085.30px;top:719px;font-size:18px;font-weight:normal;color:#8b8e94;letter-spacing:-0.315px">You can find information</div>
<div class="t" style="left:1085.30px;top:782px;font-size:18px;font-weight:normal;color:#8b8e94;letter-spacing:-0.315px">Hello! How can I assist you</div>
<div class="t" style="left:1084.30px;top:846px;font-size:18px;font-weight:normal;color:#8b8e94;letter-spacing:-0.315px">I don&#x27;t have any information</div>
<div class="t" style="left:1085.30px;top:909px;font-size:18px;font-weight:normal;color:#8b8e94;letter-spacing:-0.315px">You can find the details for</div>
</div></div>
<div class="a" style="left:633.5px;top:363px;width:410.5px;height:566.5px;overflow:hidden"><div class="a" style="left:-633.5px;top:-363px;width:1920px;height:953px">
<div class="t" style="left:862.30px;top:471px;font-size:18px;font-weight:normal;color:#8b8e94;letter-spacing:-0.315px">marryann@membermomentum.com</div>
</div></div>
<div class="a" style="left:1757.8px;top:839.4px;width:66px;height:66px;border-radius:14px;background:rgba(140,130,250,0.16)"></div>
<svg style="left:1770px;top:858px" width="40" height="38" viewBox="0 0 40 38"><path d="M6 10l14-7 14 7v14l-14 8-14-8z" fill="rgba(255,255,255,0.28)"/><path d="M6 10l14 7 14-7M20 17v15" stroke="rgba(255,255,255,0.18)" stroke-width="3" fill="none"/></svg>
</body></html>
